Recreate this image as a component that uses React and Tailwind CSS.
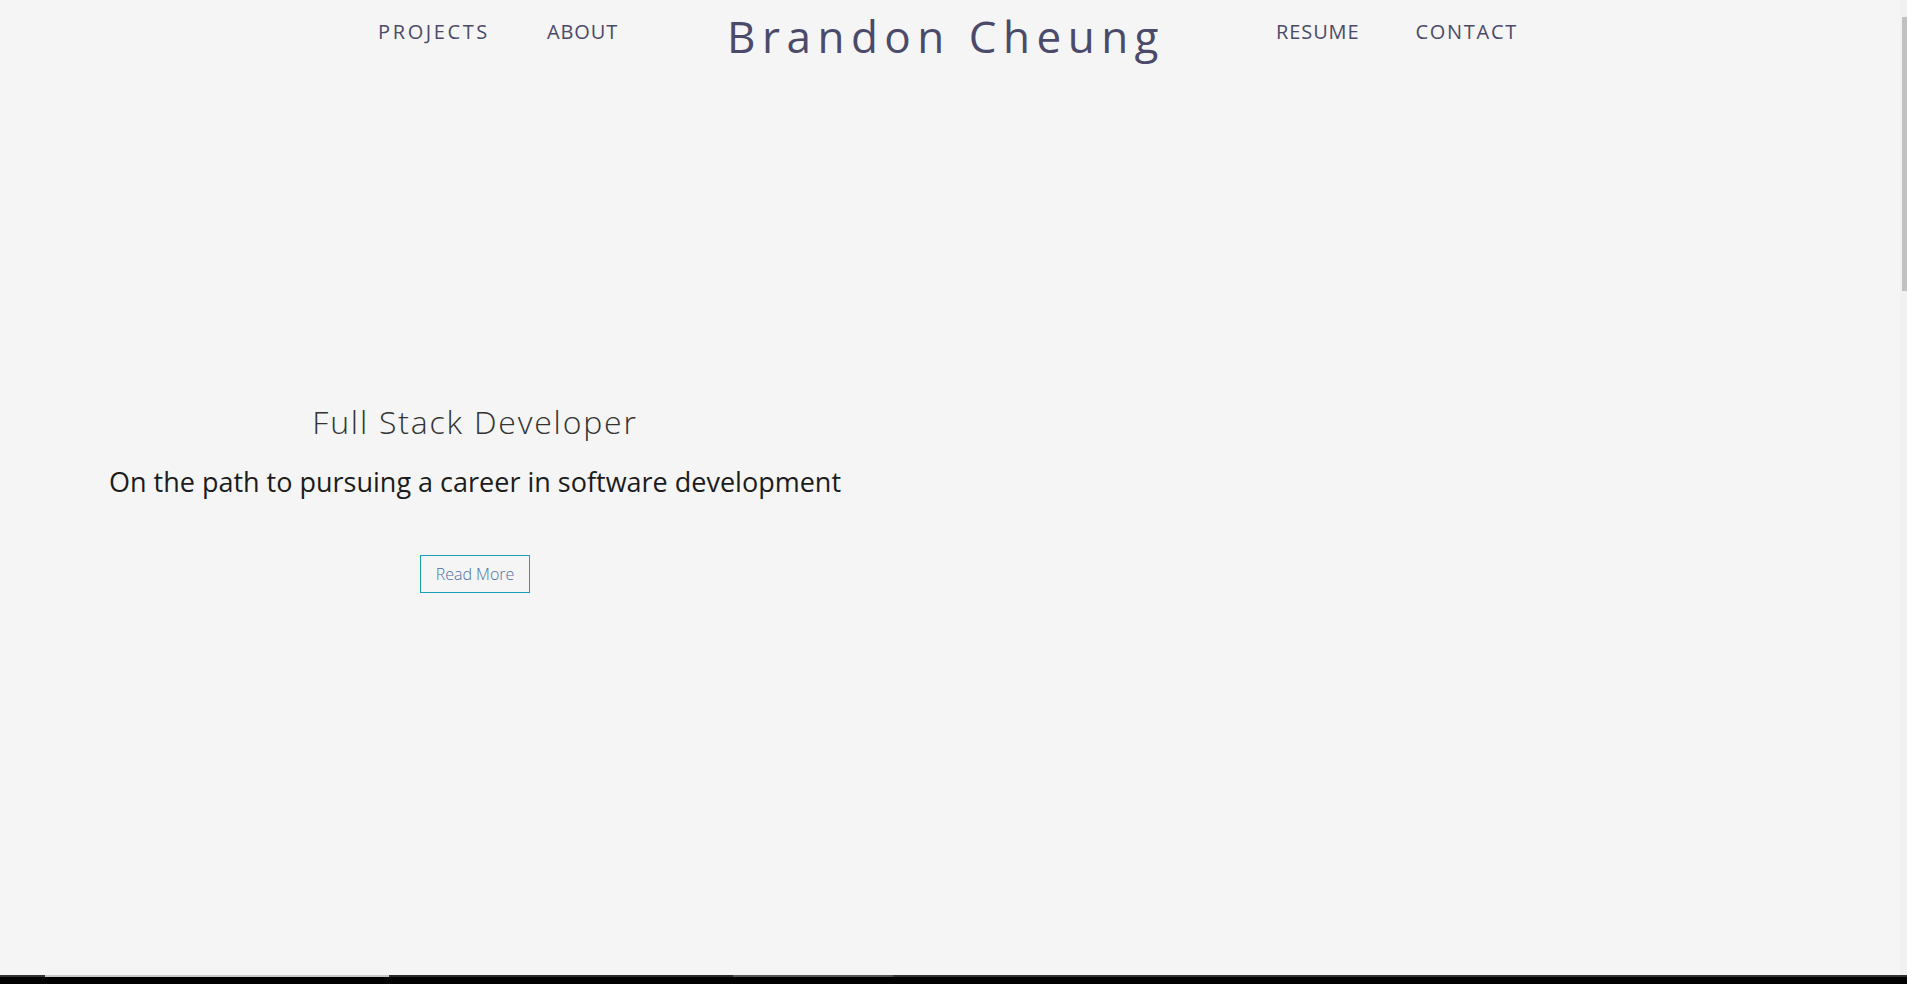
import React from 'react';

const navLink = "text-[20px] text-[#4b4a6b] uppercase leading-none";

const App = () => {
  return (
    <div className="h-[984px] w-full flex flex-col bg-[#f5f5f5] overflow-hidden font-['Open_Sans',sans-serif]">
      <div className="flex-1 flex flex-row min-h-0">
        <div className="flex-1 flex flex-col">
          {/* header */}
          <header className="flex justify-center items-start pt-[22px] pr-[4px]">
            <nav className="flex items-start">
              <a className={`${navLink} tracking-[2.6px]`}>Projects</a>
              <a className={`${navLink} ml-[57px] tracking-[0.9px]`}>About</a>
              <h1 className="ml-[109px] -mt-[8px] text-[44px] tracking-[6.5px] text-[#4b4a6b] leading-none">Brandon Cheung</h1>
              <a className={`${navLink} ml-[111px] tracking-[0.9px]`}>Resume</a>
              <a className={`${navLink} ml-[56px] tracking-[1.7px]`}>Contact</a>
            </nav>
          </header>

          {/* hero */}
          <section className="grid grid-cols-2 mt-[348px]">
            <div className="flex flex-col items-center">
              <h2 className="text-[32px] tracking-[1.8px] font-light text-[#333333] leading-none">Full Stack Developer</h2>
              <p className="mt-[30px] text-[27px] text-[#1c1c1c] leading-none">On the path to pursuing a career in software development</p>
              <button className="mt-[60px] h-[38px] px-[15px] border border-[#1aa0b8] text-[16px] font-light text-[#4a6fa5]">Read More</button>
            </div>
            <div />
          </section>
        </div>

        {/* scrollbar */}
        <div className="w-[7px] bg-[#f1f1f1] flex flex-col items-end pt-[17px] pb-[20px]">
          <div className="w-[5px] h-[274px] bg-[#c1c1c1]" />
        </div>
      </div>

      {/* bottom strip */}
      <div className="h-[9px] flex flex-col bg-black">
        <div className="h-[2px] flex">
          <div className="w-[45px] bg-[#333333]" />
          <div className="w-[344px] bg-[#c8c8c8]" />
          <div className="w-[344px] bg-[#2b2b2b]" />
          <div className="w-[160px] bg-[#555555]" />
          <div className="flex-1 bg-[#333333]" />
        </div>
      </div>
    </div>
  );
};

export default App;
